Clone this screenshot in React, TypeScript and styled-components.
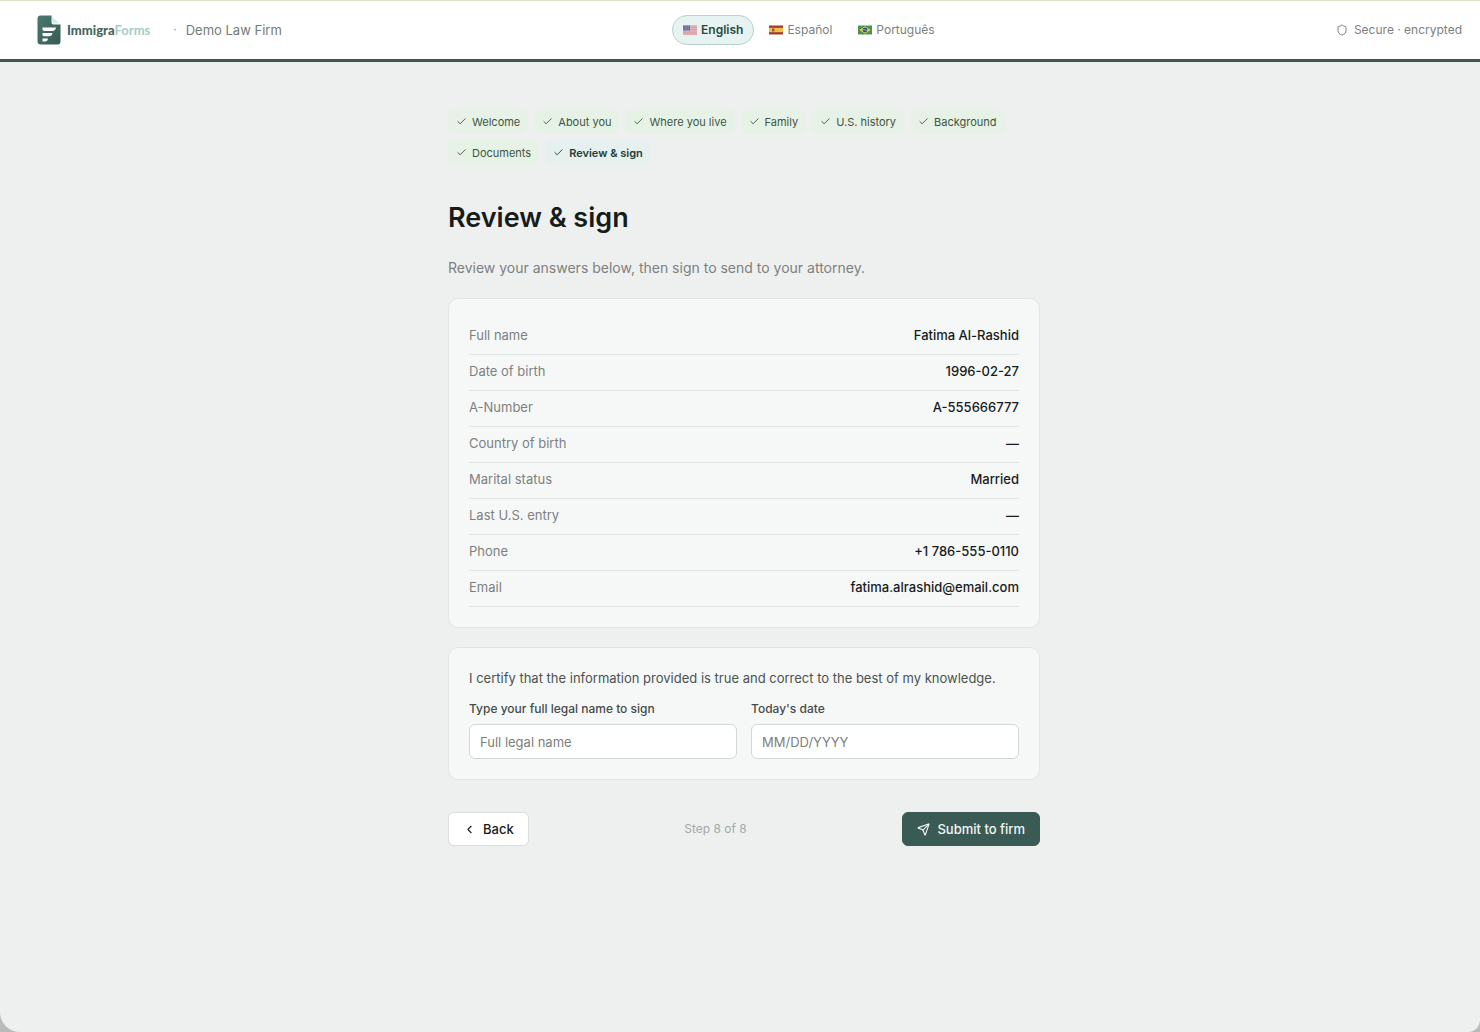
import React from "react";
import styled, { createGlobalStyle } from "styled-components";
import { Check, ChevronLeft, Send, Shield } from "lucide-react";

const GlobalStyle = createGlobalStyle`
  *, *::before, *::after { box-sizing: border-box; }
  body {
    margin: 0;
    background: #b9bbba;
    color: #171c1b;
    font-family: Inter, "Liberation Sans", sans-serif;
    font-size: 13px;
    line-height: 20px;
  }
  button, input { font: inherit; color: inherit; }
`;

const Page = styled.div`
  min-height: 100vh;
  display: flex;
  flex-direction: column;
  background: #eef0f0;
  border-radius: 0 0 12px 20px;
  overflow: hidden;
`;

const Header = styled.header`
  display: flex;
  align-items: center;
  justify-content: space-between;
  height: 62px;
  padding: 0 18px 0 36px;
  background: #fff;
  border-top: 1px solid #dedecb;
  border-bottom: 3px solid #3a5a54;
`;

const Brand = styled.div`
  display: flex;
  align-items: center;
`;

const Wordmark = styled.span`
  margin-left: 5px;
  font-family: Lato, sans-serif;
  font-size: 13px;
  font-weight: 900;
  color: #45675f;
  span { color: #a5cdc6; font-weight: 700; }
`;

const Dot = styled.span`
  margin: 0 9px 0 23px;
  color: #8b908e;
  font-size: 12px;
`;

const Firm = styled.span`
  color: #757b79;
`;

const Languages = styled.nav`
  display: flex;
  gap: 4px;
`;

const Language = styled.button<{ $active?: boolean }>`
  display: flex;
  align-items: center;
  gap: 4px;
  height: 30px;
  padding: 0 10px;
  border: 1px solid ${(p) => (p.$active ? "#b3d3cb" : "transparent")};
  border-radius: 15px;
  background: ${(p) => (p.$active ? "#e7f3f1" : "transparent")};
  color: ${(p) => (p.$active ? "#264a41" : "#7c817f")};
  font-size: 12px;
  font-weight: ${(p) => (p.$active ? 600 : 400)};
  cursor: pointer;
`;

const Secure = styled.div`
  display: flex;
  align-items: center;
  gap: 6px;
  color: #7c817f;
  font-size: 12px;
`;

const Body = styled.div`
  padding-left: 8px;
`;

const Main = styled.main`
  width: 100%;
  max-width: 592px;
  margin: 0 auto;
  padding: 47px 0 60px;
`;

const Steps = styled.ol`
  display: flex;
  flex-wrap: wrap;
  gap: 6px;
  margin: 0;
  padding: 0;
  list-style: none;
`;

const Step = styled.li<{ $current?: boolean }>`
  display: flex;
  align-items: center;
  gap: 5px;
  height: 25px;
  padding: 0 8px;
  border-radius: 6px;
  background: ${(p) => (p.$current ? "#e6f0ee" : "#e7f2e6")};
  color: ${(p) => (p.$current ? "#213f3a" : "#3c5543")};
  font-size: 11px;
  font-weight: ${(p) => (p.$current ? 600 : 400)};
`;

const Title = styled.h1`
  margin: 35px 0 0;
  font-size: 27px;
  line-height: 36px;
  font-weight: 600;
`;

const Intro = styled.p`
  margin: 22px 0 20px;
  color: #7c817f;
  font-size: 14px;
`;

const Card = styled.section`
  padding: 20px;
  border: 1px solid #e1e5e4;
  border-radius: 10px;
  background: #f6f8f8;
  & + & { margin-top: 19px; }
`;

const Answers = styled.dl`
  margin: 0;
`;

const Answer = styled.div`
  display: flex;
  justify-content: space-between;
  padding: 6px 0 9px;
  border-bottom: 1px solid #e0e4e3;
  dt { color: #7c817f; }
  dd { margin: 0; font-weight: 500; }
`;

const Certify = styled.p`
  margin: 0 0 12px;
  color: #4b5250;
`;

const Fields = styled.div`
  display: grid;
  grid-template-columns: 1fr 1fr;
  gap: 14px;
`;

const Field = styled.label`
  display: flex;
  flex-direction: column;
  gap: 6px;
  color: #454b49;
  font-size: 12px;
  line-height: 18px;
  font-weight: 500;
`;

const TextInput = styled.input`
  width: 100%;
  height: 35px;
  padding: 0 10px;
  border: 1px solid #d3d7d5;
  border-radius: 6px;
  background: #fff;
  font-size: 13px;
  font-weight: 400;
  &::placeholder { color: #7b7f7d; opacity: 1; }
`;

const Actions = styled.div`
  display: flex;
  align-items: center;
  justify-content: space-between;
  margin-top: 32px;
`;

const Button = styled.button<{ $primary?: boolean }>`
  display: flex;
  align-items: center;
  gap: 7px;
  height: 34px;
  padding: 0 14px;
  border: 1px solid ${(p) => (p.$primary ? "#3a5a54" : "#d9dddb")};
  border-radius: 6px;
  background: ${(p) => (p.$primary ? "#3a5a54" : "#fff")};
  color: ${(p) => (p.$primary ? "#f2f7f5" : "#171c1b")};
  font-weight: 500;
  cursor: pointer;
`;

const Progress = styled.span`
  color: #a3a8a6;
  font-size: 12px;
`;

function Logo() {
  return (
    <svg width="26" height="30" viewBox="0 0 26 30" aria-hidden="true">
      <defs>
        <linearGradient id="paper" x1="0" y1="0" x2="1" y2="1">
          <stop offset="0" stopColor="#4c786f" />
          <stop offset="1" stopColor="#365c54" />
        </linearGradient>
      </defs>
      <path d="M4.500 .5h11V7.500q0 2 2 2h7V26q0 3.500-3 3.500H5q-3.500 0-3.500-3V3.500q0-3 3-3z" fill="url(#paper)" />
      <path d="M16 1.500 23.500 8.500H18q-2 0-2-2z" fill="#d7ebe7" />
      <g fill="#fff">
        <path d="M6.500 12.500h13.500q-.5 3.500-4 3.500H8.500q-2.500 0-2-3.500z" />
        <path d="M6.500 18h10q-.5 3.200-4 3.200h-4.500q-2 0-1.500-3.200z" />
        <path d="M6.500 23.500h5.500q-.5 3-3 3H6.500z" />
      </g>
    </svg>
  );
}

function Flag({ code }: { code: string }) {
  return (
    <svg width="14" height="10" viewBox="0 0 14 10" aria-hidden="true">
      {code === "en" && (
        <>
          <path fill="#ecd0d5" d="M0 .5h14v9H0z" />
          <path stroke="#cf7f88" strokeWidth=".8" d="M0 1h14M0 2.700h14M0 4.400h14M0 6.100h14M0 7.800h14M0 9.200h14" />
          <path fill="#66709f" d="M0 .5h7v5H0z" />
          <path stroke="#b4bad4" strokeWidth=".5" strokeDasharray=".6 .9" d="M.6 1.700h6M.6 3h6M.6 4.300h6" />
        </>
      )}
      {code === "es" && (
        <>
          <path fill="#a33a30" d="M0 .5h14v9H0z" />
          <path fill="#eec04a" d="M0 2.800h14v4.400H0z" />
          <path fill="#a55d33" d="M3 3.500h2.500v3H3z" />
        </>
      )}
      {code === "pt" && (
        <>
          <path fill="#4c9350" d="M0 .5h14v9H0z" />
          <path fill="#dccf62" d="M7 1.200 12.500 5 7 8.800 1.500 5z" />
          <circle cx="7" cy="5" r="2.400" fill="#34547f" />
          <path stroke="#dce6ee" strokeWidth=".5" fill="none" d="M5 4.600q2-.3 4 1.100" />
        </>
      )}
    </svg>
  );
}

const languages = [
  { code: "en", name: "English" },
  { code: "es", name: "Español" },
  { code: "pt", name: "Português" },
];

const steps = ["Welcome", "About you", "Where you live", "Family", "U.S. history", "Background", "Documents", "Review & sign"];

const answers = [
  ["Full name", "Fatima Al-Rashid"],
  ["Date of birth", "1996-02-27"],
  ["A-Number", "A-555666777"],
  ["Country of birth", "—"],
  ["Marital status", "Married"],
  ["Last U.S. entry", "—"],
  ["Phone", "+1 786-555-0110"],
  ["Email", "fatima.alrashid@email.com"],
];

export default function App() {
  return (
    <>
      <GlobalStyle />
      <Page>
        <Header>
          <Brand>
            <Logo />
            <Wordmark>Immigra<span>Forms</span></Wordmark>
            <Dot>·</Dot>
            <Firm>Demo Law Firm</Firm>
          </Brand>
          <Languages aria-label="Language">
            {languages.map((l) => (
              <Language key={l.code} type="button" $active={l.code === "en"}>
                <Flag code={l.code} />
                {l.name}
              </Language>
            ))}
          </Languages>
          <Secure>
            <Shield size={12} strokeWidth={2} />
            Secure · encrypted
          </Secure>
        </Header>
        <Body>
          <Main>
            <Steps>
              {steps.map((s, i) => (
                <Step key={s} $current={i === steps.length - 1}>
                  <Check size={11} strokeWidth={2} />
                  {s}
                </Step>
              ))}
            </Steps>
            <Title>Review &amp; sign</Title>
            <Intro>Review your answers below, then sign to send to your attorney.</Intro>
            <Card>
              <Answers>
                {answers.map(([label, value]) => (
                  <Answer key={label}>
                    <dt>{label}</dt>
                    <dd>{value}</dd>
                  </Answer>
                ))}
              </Answers>
            </Card>
            <Card>
              <Certify>I certify that the information provided is true and correct to the best of my knowledge.</Certify>
              <Fields>
                <Field>
                  Type your full legal name to sign
                  <TextInput type="text" placeholder="Full legal name" />
                </Field>
                <Field>
                  Today's date
                  <TextInput type="text" placeholder="MM/DD/YYYY" />
                </Field>
              </Fields>
            </Card>
            <Actions>
              <Button type="button">
                <ChevronLeft size={13} strokeWidth={2} />
                Back
              </Button>
              <Progress>Step 8 of 8</Progress>
              <Button type="button" $primary>
                <Send size={13} strokeWidth={2} />
                Submit to firm
              </Button>
            </Actions>
          </Main>
        </Body>
      </Page>
    </>
  );
}
